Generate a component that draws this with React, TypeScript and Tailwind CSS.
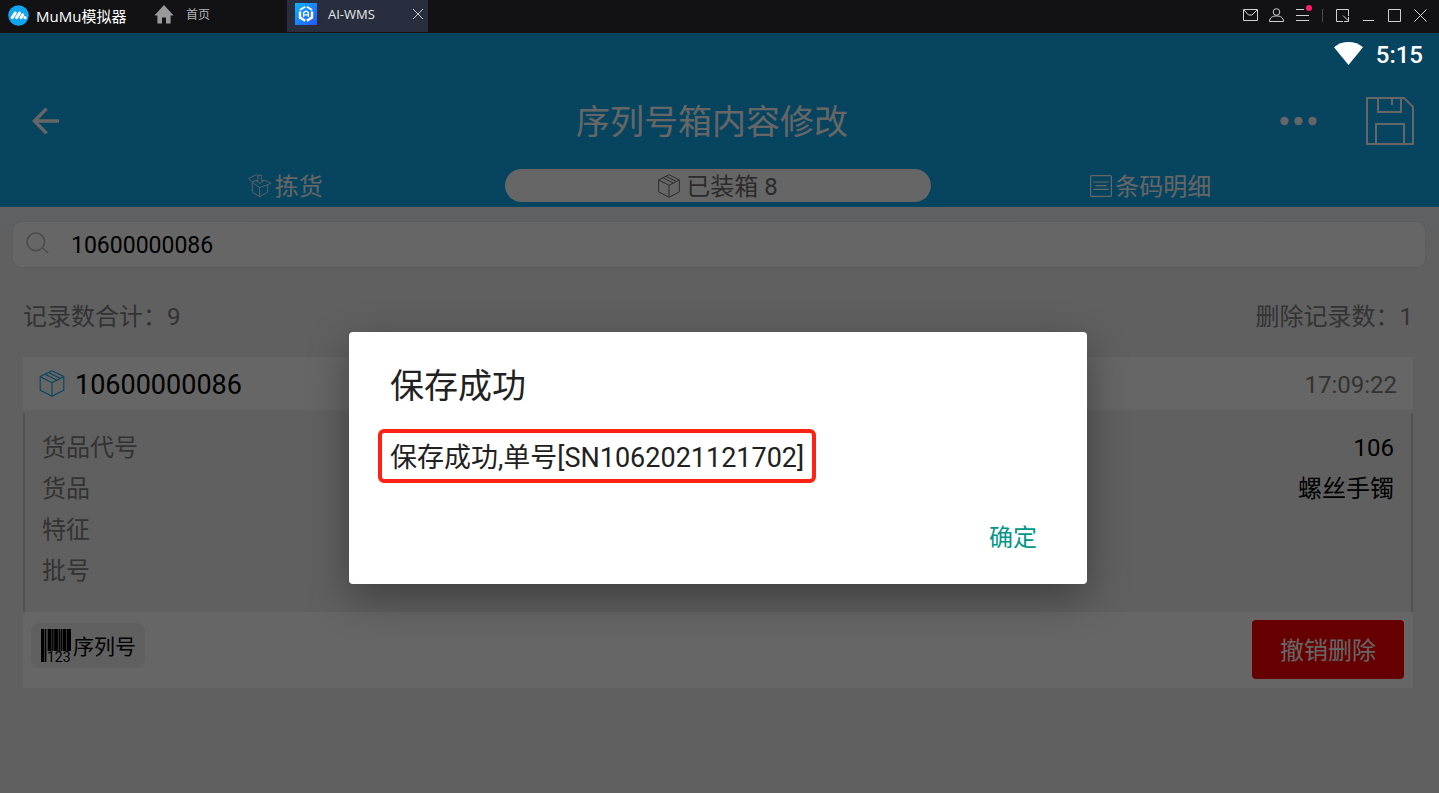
import React from "react";

type IconProps = { className?: string };

const records = [
  { label: "货品代号", value: "106" },
  { label: "货品", value: "螺丝手镯" },
  { label: "特征", value: "" },
  { label: "批号", value: "" },
];

function MuMuLogo() {
  return (
    <svg width="21" height="21" viewBox="0 0 21 21" aria-hidden="true">
      <circle cx="10.5" cy="10.5" r="10.3" fill="#10a5ee" />
      <g stroke="#fff" strokeWidth="3" strokeLinecap="round">
        <path d="M4.2 12.6 7.2 8" />
        <path d="M8.6 12.6 11.6 8" />
        <path d="M13 12.6 14.8 9.8" />
      </g>
      <circle cx="17" cy="12.6" r="1.6" fill="#fff" />
    </svg>
  );
}

function HomeIcon() {
  return (
    <svg width="20" height="19" viewBox="0 0 20 19" fill="#999" aria-hidden="true">
      <path d="M10 0 19.6 10.4H16.6V18.5H12V12.5H8V18.5H3.4V10.4H.4Z" />
    </svg>
  );
}

function WmsLogo() {
  return (
    <svg width="22" height="22" viewBox="0 0 22 22" aria-hidden="true">
      <defs>
        <linearGradient id="wms" x1="0" y1="0" x2="1" y2="1">
          <stop offset="0" stopColor="#10b4f8" />
          <stop offset="1" stopColor="#2457ff" />
        </linearGradient>
      </defs>
      <rect width="22" height="22" fill="url(#wms)" />
      <g fill="none" stroke="#fff">
        <path d="M10.2 3.8 4.8 7M11.8 3.8 17.2 7" strokeWidth="1.8" />
        <path d="M5 8.4V14.6L10.2 17.8M17 8.4V14.6L11.8 17.8" strokeWidth="2.4" />
        <path d="M8.6 14V9.6L11 8 13.4 9.6V14M8.6 11.8H13.4" strokeWidth="1.3" />
      </g>
    </svg>
  );
}

function CubeIcon({ className }: IconProps) {
  return (
    <svg className={className} viewBox="0 0 25 27" fill="none" stroke="currentColor" strokeWidth="1.1" strokeLinejoin="round" aria-hidden="true">
      <path d="M12.5.7 24.3 6.6V20.2L12.5 26.3.7 20.2V6.6Z" />
      <path d="M.7 6.6 12.5 12.8 24.3 6.6M12.5 12.8V26.3" />
      <path d="M5.6 4.2 17.4 10.2M9.2 2.4 20.8 8.4" />
    </svg>
  );
}

function OpenBoxIcon() {
  return (
    <svg width="24" height="24" viewBox="0 0 24 24" fill="none" stroke="currentColor" strokeWidth="1" strokeLinejoin="round" opacity=".85" aria-hidden="true">
      <path d="M4.3 8.2V18.2L11.6 22.6 19.6 18.2V10.6M11.6 22.6V13.6" />
      <path d="M4.3 8.2.6 4.4 8.4.7 10 2M4.3 8.2 11.6 13.6 23.2 9.4 18 6.6 14.6 7M4.3 8.2 8 6.4" />
      <path d="M10 1.2H13.6V6.4H15.6L12 9.4 7.8 6.4H10Z" />
    </svg>
  );
}

function ListIcon() {
  return (
    <svg width="22" height="22" viewBox="0 0 22 22" fill="none" stroke="currentColor" strokeWidth="1.2" aria-hidden="true">
      <rect x=".6" y=".6" width="20.8" height="20.8" rx="1" />
      <path d="M3.4 7H18.6M5.4 10.6H16.6M3.4 14.4H18.6" />
    </svg>
  );
}

function BarcodeIcon() {
  return (
    <span className="relative block h-[34px] w-[30px]">
      <svg width="30" height="34" viewBox="0 0 30 34" fill="#000" aria-hidden="true">
        <path d="M0 0H3.4V33H0ZM4 0H5.4V33H4ZM6.6 0H10.6V22H6.6ZM11.1 0H12.6V22H11.1ZM13.1 0H16.9V22H13.1ZM17.5 0H19V22H17.5ZM19.5 0H21.2V22H19.5ZM21.7 0H25.5V22H21.7ZM26 0H30V22H26Z" />
      </svg>
      <span className="absolute top-[21px] left-[6px] text-[14px] leading-[14px]">123</span>
    </span>
  );
}

function WindowButton({ label, children }: { label: string; children: React.ReactNode }) {
  return (
    <button type="button" aria-label={label} className="size-4">
      <svg width="16" height="16" viewBox="0 0 16 16" fill="none" stroke="#d0d0d0" strokeWidth="1" className="overflow-visible" aria-hidden="true">
        {children}
      </svg>
    </button>
  );
}

function TitleBar() {
  return (
    <div className="flex h-[33px] shrink-0 items-start bg-[#121214] font-['Open_Sans','Noto_Sans_CJK_SC',sans-serif]">
      <div className="flex h-[30px] w-[154px] items-center gap-[7px] pl-2 text-[15px] text-white">
        <MuMuLogo />
        <span className="pt-0.5">MuMu模拟器</span>
      </div>
      <a href="#home" className="flex h-7 w-[133px] items-center gap-3 text-[12px] text-[#b4b4b4]">
        <HomeIcon />
        <span className="pt-0.5">首页</span>
      </a>
      <div className="flex h-8 w-[141px] items-center bg-[#282e3e] pl-2 text-[13px] text-[#e6e6e6]">
        <span className="flex flex-1 items-center gap-[11px] pb-1">
          <WmsLogo />
          <span className="pt-0.5">AI-WMS</span>
        </span>
        <button type="button" aria-label="关闭标签" className="mr-[2px] mb-1 size-4">
          <svg width="16" height="16" viewBox="0 0 16 16" stroke="#c8c8c8" aria-hidden="true">
            <path d="M3 3 13 13M13 3 3 13" />
          </svg>
        </button>
      </div>
      <div className="ml-auto flex h-[30px] items-center gap-[10px] pr-[11px]">
        <WindowButton label="消息">
          <path d="M1.5 2.5H15.5V13.5H1.5ZM2 3 6.5 8H10L15 3" />
        </WindowButton>
        <WindowButton label="账号">
          <circle cx="8.5" cy="5" r="3.3" />
          <path d="M1.5 14.5C1.5 10.5 4.5 9 8.5 9S15.5 10.5 15.5 14.5Z" />
        </WindowButton>
        <WindowButton label="菜单">
          <path d="M2 2.5H10M2 8.5H15M2 13.5H15" />
          <circle cx="15" cy="1" r="3" fill="#ff1c6b" stroke="none" />
        </WindowButton>
        <span className="flex w-1 justify-center">
          <span className="h-[13px] w-px bg-[#4a4a4a]" />
        </span>
        <WindowButton label="小窗">
          <path d="M9 14.5H2.5V2.5H14.5V9M9 8.5 14 13.5M14.5 10V14.5H10" />
        </WindowButton>
        <WindowButton label="最小化">
          <path d="M3 13.5H14" />
        </WindowButton>
        <WindowButton label="最大化">
          <path d="M2.5 2.5H14.5V14.5H2.5Z" />
        </WindowButton>
        <WindowButton label="关闭">
          <path d="M2.5 2.5 14.5 14.5M14.5 2.5 2.5 14.5" />
        </WindowButton>
      </div>
    </div>
  );
}

function Header() {
  return (
    <header className="bg-[#12aaed] text-white">
      <div className="flex h-11 items-center justify-end pr-4">
        <div className="relative z-20 flex items-center gap-[13px] text-[24px] font-medium">
          <svg width="29" height="23" viewBox="0 0 29 23" fill="#fff" className="mb-1" aria-hidden="true">
            <path d="M14.5 23 0 5.2C4 1.8 9 0 14.5 0S25 1.8 29 5.2Z" />
          </svg>
          <time>5:15</time>
        </div>
      </div>
      <div className="flex h-[88px] items-center pr-[25px]">
        <div className="w-36 pl-8">
          <button type="button" aria-label="返回" className="block">
            <svg width="28" height="28" viewBox="0 0 28 28" fill="none" stroke="currentColor" strokeWidth="3.4" aria-hidden="true">
              <path d="M27 14H3M14.6 1.6 2.4 14 14.6 26.4" />
            </svg>
          </button>
        </div>
        <h1 className="flex-1 pt-0.5 text-center text-[34px] leading-[50px]">序列号箱内容修改</h1>
        <button type="button" aria-label="更多" className="mr-12">
          <svg width="38" height="10" viewBox="0 0 38 10" fill="currentColor" aria-hidden="true">
            <circle cx="4.5" cy="5" r="4.2" />
            <circle cx="18.5" cy="5" r="4.2" />
            <circle cx="32.5" cy="5" r="4.2" />
          </svg>
        </button>
        <button type="button" aria-label="保存">
          <svg width="48" height="48" viewBox="0 0 48 48" fill="none" stroke="currentColor" strokeWidth="2" aria-hidden="true">
            <path d="M1 1H38L47 10V47H1ZM12 1V15H35V1M26 2V8M10 47V27H38V47" />
          </svg>
        </button>
      </div>
      <nav className="grid h-[42px] grid-cols-3 pt-1 pr-[72px] pb-[5px] pl-[69px] text-[24px] leading-[30px]">
        <button type="button" className="flex items-center justify-center gap-[3px]">
          <OpenBoxIcon />
          <span className="pt-[3px]">拣货</span>
        </button>
        <button type="button" className="mx-[3px] flex items-center justify-center gap-1.5 rounded-full bg-white text-[#6c6c6c]">
          <CubeIcon className="h-6 w-[22px]" />
          <span className="pt-[3px]">已装箱 8</span>
        </button>
        <button type="button" className="flex items-center justify-center gap-[3px]">
          <ListIcon />
          <span className="pt-[3px]">条码明细</span>
        </button>
      </nav>
    </header>
  );
}

function RecordCard() {
  return (
    <article className="mr-[26px] ml-[23px] bg-white">
      <div className="flex h-[53px] items-center px-4">
        <CubeIcon className="h-[27px] w-[26px] text-[#12aaed]" />
        <h2 className="ml-[10px] pt-[3px] text-[27px]">10600000086</h2>
        <time className="ml-auto pt-[3px] text-[24px] text-[#808080]">17:09:22</time>
      </div>
      <div className="bg-[#efefef] pt-[3px]">
        <dl className="h-[199px] border-x-2 border-[#cdcdcd] px-[17px] pt-[14px] text-[24px]">
          {records.map((row) => (
            <div key={row.label} className="flex h-[41px] items-center justify-between">
              <dt className="text-[#808080]">{row.label}</dt>
              <dd className="text-black">{row.value}</dd>
            </div>
          ))}
        </dl>
      </div>
      <div className="flex h-[76px] items-start justify-between pt-2 pr-[9px] pl-2">
        <button type="button" className="mt-[3px] flex h-[45px] items-center gap-[2px] rounded-lg bg-[#f0f0f0] pr-[9px] pl-[10px] text-[21px] text-black">
          <BarcodeIcon />
          <span className="pt-1">序列号</span>
        </button>
        <button type="button" className="h-[59px] w-[152px] rounded bg-[#ff0000] pt-0.5 text-[24px] text-white">
          撤销删除
        </button>
      </div>
    </article>
  );
}

function SaveDialog() {
  return (
    <div className="absolute inset-0 z-10 flex items-center justify-center bg-black/60 pt-[90px] pr-[3px]">
      <section
        role="dialog"
        aria-modal="true"
        aria-labelledby="dialog-title"
        className="flex h-[252px] w-[738px] max-w-full flex-col rounded bg-white px-[29px] text-[#212121] shadow-[0_14px_40px_rgba(0,0,0,0.35)]"
      >
        <h2 id="dialog-title" className="mt-[29px] px-3 text-[34px] leading-[50px]">保存成功</h2>
        <p className="mt-[18px] flex h-[54px] items-center self-start rounded-md border-4 border-[#ff2113] px-2 pt-1 text-[27px]">
          保存成功,单号[SN1062021121702]
        </p>
        <button type="button" className="mt-[37px] mr-[21px] self-end text-[24px] leading-9 text-[#009688]">
          确定
        </button>
      </section>
    </div>
  );
}

export default function App() {
  return (
    <div className="flex min-h-screen flex-col">
      <TitleBar />
      <main className="relative flex-1 bg-[#f0f0f0] font-['Roboto','Noto_Sans_CJK_SC',sans-serif]">
        <Header />
        <div className="bg-linear-to-b from-[#eff2f5] to-[#f0f0f0] pt-[15px] pr-[14px] pb-2 pl-[13px]">
          <label className="flex h-[45px] items-center gap-[22px] rounded-lg bg-white pl-[13px] shadow-[0_0_2px_rgba(0,0,0,0.15)]">
            <svg width="23" height="22" viewBox="0 0 23 22" fill="none" stroke="#bbb" strokeWidth="1.6" className="mb-[3px]" aria-hidden="true">
              <circle cx="9.8" cy="9.8" r="8.8" />
              <path d="M16 15.5 22 21" />
            </svg>
            <input type="text" aria-label="箱号" defaultValue="10600000086" className="min-w-0 flex-1 pt-1 text-[23px] text-black outline-none" />
          </label>
        </div>
        <div className="flex h-[82px] items-center justify-between pt-0.5 pr-[26px] pl-[23px] text-[24px] text-[#808080]">
          <p>记录数合计：9</p>
          <p>删除记录数：1</p>
        </div>
        <RecordCard />
        <SaveDialog />
      </main>
    </div>
  );
}
